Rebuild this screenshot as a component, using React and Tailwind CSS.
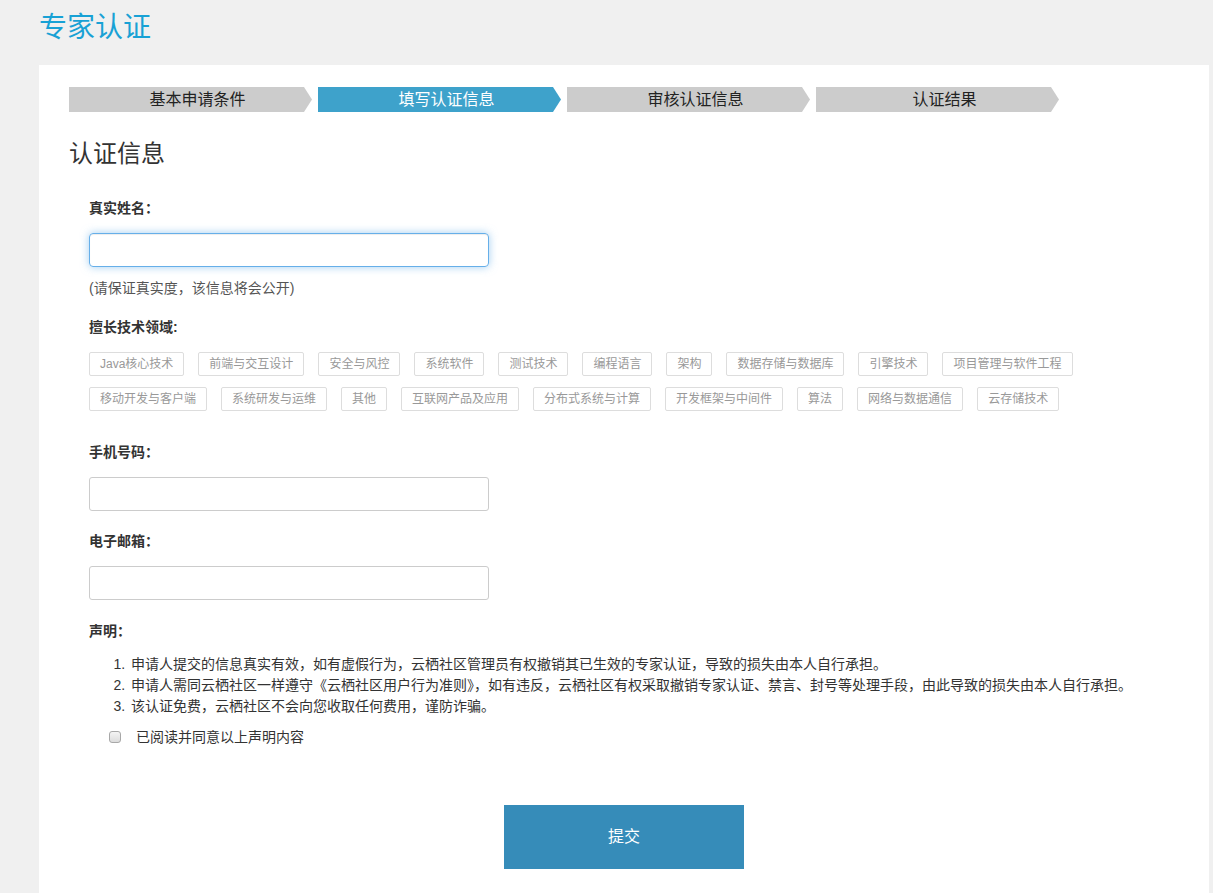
import React from 'react'

const steps = ['基本申请条件', '填写认证信息', '审核认证信息', '认证结果']

const tagRows = [
  ['Java核心技术', '前端与交互设计', '安全与风控', '系统软件', '测试技术', '编程语言', '架构', '数据存储与数据库', '引擎技术', '项目管理与软件工程'],
  ['移动开发与客户端', '系统研发与运维', '其他', '互联网产品及应用', '分布式系统与计算', '开发框架与中间件', '算法', '网络与数据通信', '云存储技术'],
]

const notes = [
  '申请人提交的信息真实有效，如有虚假行为，云栖社区管理员有权撤销其已生效的专家认证，导致的损失由本人自行承担。',
  '申请人需同云栖社区一样遵守《云栖社区用户行为准则》，如有违反，云栖社区有权采取撤销专家认证、禁言、封号等处理手段，由此导致的损失由本人自行承担。',
  '该认证免费，云栖社区不会向您收取任何费用，谨防诈骗。',
]

function Label({ children, className = '' }) {
  return <p className={`text-[14px] leading-[20px] font-bold text-[#333] ${className}`}>{children}</p>
}

export default function App() {
  return (
    <div className="min-h-screen bg-[#f0f0f0] font-['Liberation_Sans','Noto_Sans_CJK_SC',sans-serif] pb-10">
      <h1 className="pt-2 pl-[39px] text-[28px] leading-[40px] text-[#18a1d5]">专家认证</h1>

      <div className="mt-[17px] ml-[39px] w-[1170px] bg-white pt-[22px] px-[30px] pb-10">
        {/* steps */}
        <div className="flex gap-[6px]">
          {steps.map((s, i) => (
            <div
              key={s}
              className={`w-[243px] h-[25px] pl-[22px] pr-[8px] flex items-center justify-center text-[16px] leading-[25px] [clip-path:polygon(0_0,calc(100%-8px)_0,100%_50%,calc(100%-8px)_100%,0_100%)] ${
                i === 1 ? 'bg-[#3ea2cb] text-white' : 'bg-[#cccccc] text-[#222]'
              }`}
            >
              {s}
            </div>
          ))}
        </div>

        <h2 className="mt-[25px] text-[24px] leading-[34px] text-[#333]">认证信息</h2>

        <div className="pl-[20px]">
          <Label className="mt-[27px]">真实姓名：</Label>
          <input
            className="mt-[15px] block w-[400px] h-[34px] rounded-[4px] border border-[#66afe9] px-3 text-[14px] outline-none shadow-[inset_0_1px_1px_rgba(0,0,0,0.075),0_0_8px_rgba(102,175,233,0.6)]"
          />
          <p className="mt-[11px] text-[14px] leading-[20px] text-[#555]">(请保证真实度，该信息将会公开)</p>

          <Label className="mt-[19px]">擅长技术领域:</Label>
          <div className="mt-[15px] flex flex-col gap-[11px]">
            {tagRows.map((row, ri) => (
              <div key={ri} className="flex gap-[14px]">
                {row.map((t) => (
                  <span
                    key={t}
                    className="h-[24px] px-[10px] flex items-center border border-[#dddddd] rounded-[2px] text-[12px] leading-[22px] text-[#999]"
                  >
                    {t}
                  </span>
                ))}
              </div>
            ))}
          </div>

          <Label className="mt-[31px]">手机号码：</Label>
          <input className="mt-[15px] block w-[400px] h-[34px] rounded-[3px] border border-[#cccccc] px-3 text-[14px] outline-none" />

          <Label className="mt-[20px]">电子邮箱：</Label>
          <input className="mt-[15px] block w-[400px] h-[34px] rounded-[3px] border border-[#cccccc] px-3 text-[14px] outline-none" />

          <Label className="mt-[21px]">声明：</Label>
          <ol className="mt-[13px] list-decimal pl-[40px] text-[14px] leading-[21px] text-[#333]">
            {notes.map((n) => (
              <li key={n} className="pl-[2px]">{n}</li>
            ))}
          </ol>

          <label className="mt-[10px] ml-[20px] flex items-center h-[20px] text-[14px] text-[#333]">
            <span className="w-[12px] h-[12px] rounded-[3px] border border-[#a8a8a8] bg-gradient-to-b from-[#f4f4f4] to-[#dcdcdc]"></span>
            <span className="ml-[15px]">已阅读并同意以上声明内容</span>
          </label>
        </div>

        <div className="mt-[58px] flex justify-center">
          <button className="w-[240px] h-[64px] bg-[#368cb9] text-white text-[16px]">提交</button>
        </div>
      </div>
    </div>
  )
}
